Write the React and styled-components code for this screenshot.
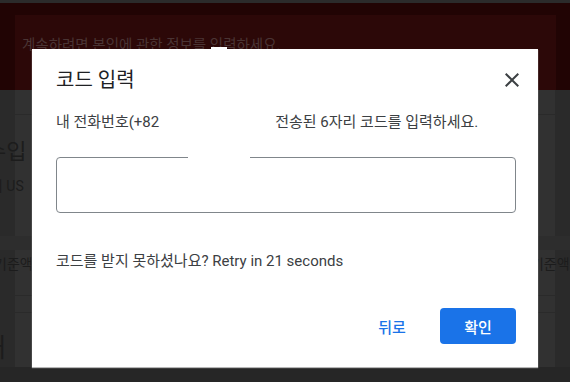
import React from "react";
import styled, { createGlobalStyle } from "styled-components";

const GlobalStyle = createGlobalStyle`
  html, body {
    margin: 0;
    padding: 0;
    background: #292929;
  }
  body {
    font-family: Roboto, "Noto Sans CJK KR", sans-serif;
  }
`;

// 모달 뒤의 페이지 (어둡게 가려진 상태)
const Page = styled.div`
  position: relative;
  width: 570px;
  height: 382px;
  overflow: hidden;
  background: #292929;
`;

const TopStrip = styled.div`
  height: 3px;
  background: #2b2b2b;
`;

const Banner = styled.div`
  height: 87px;
  box-sizing: border-box;
  padding: 12px 14px 0 15px;
  background: #210404;
`;

const BannerCard = styled.div`
  height: 75px;
  box-sizing: border-box;
  padding: 21px 7px 0;
  background: #2c0808;
  color: #4a3434;
  font-size: 14.5px;
  line-height: 20px;
  white-space: nowrap;
`;

const Body = styled.div`
  height: 277px;
  display: flex;
  flex-direction: column;
  background: linear-gradient(
    to right,
    #2a2a2a 0 15px,
    #313131 15px 555px,
    #2a2a2a 555px
  );
`;

const Row = styled.div`
  height: ${(p) => p.$h}px;
  box-sizing: border-box;
  flex-shrink: 0;
  border-bottom: ${(p) => (p.$line ? "1px solid #2a2a2a" : "none")};
  background: ${(p) => p.$bg || "transparent"};
  display: flex;
  align-items: ${(p) => p.$align || "center"};
  justify-content: space-between;
  white-space: nowrap;
`;

const DimText = styled.span`
  color: #1c1c1c;
  font-size: ${(p) => p.$size || 14}px;
  margin-left: ${(p) => p.$ml || 0}px;
  margin-right: ${(p) => p.$mr || 0}px;
  margin-top: ${(p) => p.$mt || 0}px;
`;

const Footer = styled.div`
  height: 15px;
  background: #262626;
`;

// 모달
const Dialog = styled.div`
  position: absolute;
  left: 32px;
  top: 49px;
  width: 506px;
  height: 318px;
  box-sizing: border-box;
  padding: 17px 22px 23px 24px;
  background: #fff;
  box-shadow: 0 1px 1px rgba(200, 200, 200, 0.9);
  display: flex;
  flex-direction: column;
  color: #3c4043;
`;

const Notch = styled.div`
  position: absolute;
  left: 179px;
  top: -2px;
  width: 16px;
  height: 2px;
  background: #fff;
`;

const Header = styled.div`
  display: flex;
  align-items: center;
  justify-content: space-between;
`;

const Title = styled.h2`
  margin: 0;
  font-size: 20px;
  line-height: 28px;
  font-weight: 400;
  color: #202124;
`;

const CloseButton = styled.button`
  width: 24px;
  height: 24px;
  margin-right: -8px;
  padding: 0;
  border: 0;
  background: none;
  display: flex;
  align-items: center;
  justify-content: center;
  color: #3c4043;
`;

const Desc = styled.p`
  margin: 18px 0 0;
  font-size: 15px;
  line-height: 20px;
  white-space: nowrap;
`;

const Hidden = styled.span`
  display: inline-block;
  width: ${(p) => p.$w}px;
`;

const InputWrap = styled.div`
  position: relative;
  margin-top: 25px;
`;

const CodeInput = styled.input`
  display: block;
  width: 100%;
  height: 56px;
  box-sizing: border-box;
  border: 1px solid #80868b;
  border-radius: 4px;
  padding: 0 15px;
  font-size: 16px;
  font-family: inherit;
  outline: none;
`;

const BorderGap = styled.div`
  position: absolute;
  left: 132px;
  top: 0;
  width: 62px;
  height: 2px;
  background: #fff;
`;

const Retry = styled.p`
  margin: 38px 0 0;
  font-size: 15px;
  line-height: 20px;
`;

const Actions = styled.div`
  margin-top: auto;
  display: flex;
  justify-content: flex-end;
  align-items: center;
  gap: 16px;
`;

const Button = styled.button`
  height: 36px;
  width: ${(p) => (p.$primary ? 76 : 64)}px;
  padding: 0;
  border: 0;
  border-radius: 4px;
  font-family: inherit;
  font-size: 15px;
  font-weight: 500;
  color: ${(p) => (p.$primary ? "#fff" : "#1a73e8")};
  background: ${(p) => (p.$primary ? "#1a73e8" : "transparent")};
`;

function CloseIcon() {
  return (
    <svg width="24" height="24" viewBox="0 0 24 24" fill="currentColor">
      <path d="M19 6.41 17.59 5 12 10.59 6.41 5 5 6.41 10.59 12 5 17.59 6.41 19 12 13.41 17.59 19 19 17.59 13.41 12z" />
    </svg>
  );
}

export default function App() {
  return (
    <>
      <GlobalStyle />
      <Page>
        <TopStrip />
        <Banner>
          <BannerCard>계속하려면 본인에 관한 정보를 입력하세요.</BannerCard>
        </Banner>
        <Body>
          <Row $h={25} $line />
          <Row $h={50} $align="flex-end">
            <DimText $size={22} $ml={-14}>수입</DimText>
          </Row>
          <Row $h={40}>
            <DimText $ml={-10}>이 US</DimText>
          </Row>
          <Row $h={31} />
          <Row $h={14} $bg="#2d2d2d" />
          <Row $h={26}>
            <DimText $ml={-6}>기준액:</DimText>
            <DimText $mr={-3}>기준액:</DimText>
          </Row>
          <Row $h={20} $line />
          <Row $h={17} $line />
          <Row $h={54} $align="flex-start">
            <DimText $size={26} $ml={-18} $mt={14}>
              내
            </DimText>
          </Row>
        </Body>
        <Footer />

        <Dialog role="dialog">
          <Notch />
          <Header>
            <Title>코드 입력</Title>
            <CloseButton aria-label="닫기">
              <CloseIcon />
            </CloseButton>
          </Header>
          <Desc>
            내 전화번호(+82<Hidden $w={116} />전송된 6자리 코드를 입력하세요.
          </Desc>
          <InputWrap>
            <CodeInput type="text" />
            <BorderGap />
          </InputWrap>
          <Retry>코드를 받지 못하셨나요? Retry in 21 seconds</Retry>
          <Actions>
            <Button>뒤로</Button>
            <Button $primary>확인</Button>
          </Actions>
        </Dialog>
      </Page>
    </>
  );
}
